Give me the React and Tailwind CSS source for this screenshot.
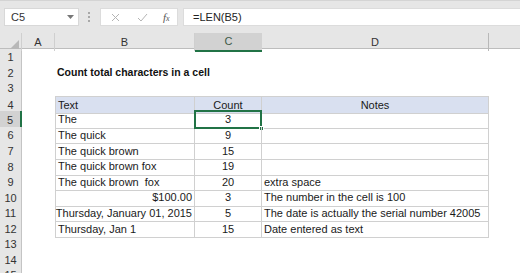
import React from 'react';

const font = { fontFamily: '"Liberation Sans", Arial, sans-serif' };

const rows = [
  { n: 1 },
  { n: 2, title: 'Count total characters in a cell' },
  { n: 3 },
  { n: 4, head: true, b: 'Text', c: 'Count', d: 'Notes' },
  { n: 5, b: 'The', c: '3', d: '', selected: true },
  { n: 6, b: 'The quick', c: '9', d: '' },
  { n: 7, b: 'The quick brown', c: '15', d: '' },
  { n: 8, b: 'The quick brown fox', c: '19', d: '' },
  { n: 9, b: 'The quick brown  fox', c: '20', d: 'extra space' },
  { n: 10, b: '$100.00', right: true, c: '3', d: 'The number in the cell is 100' },
  { n: 11, b: 'Thursday, January 01, 2015', right: true, c: '5', d: 'The date is actually the serial number 42005' },
  { n: 12, b: 'Thursday, Jan 1', c: '15', d: 'Date entered as text' },
  { n: 13 },
  { n: 14 },
  { n: 15 },
];

const FormulaBar = () => (
  <div className="h-[33px] bg-[#e6e6e6] border-t border-[#d4d4d4] flex items-center">
    <div className="ml-[4px] w-[75px] h-[18px] bg-white border border-[#d8d8d8] flex items-center justify-between pl-[6px] pr-[4px]">
      <span className="text-[11px] text-[#333]">C5</span>
      <svg width="7" height="4" viewBox="0 0 7 4"><path d="M0 0h7L3.5 4z" fill="#777" /></svg>
    </div>
    <div className="ml-[9px] flex flex-col gap-[2px]">
      <span className="w-[2px] h-[2px] bg-[#a8a8a8]" />
      <span className="w-[2px] h-[2px] bg-[#a8a8a8]" />
      <span className="w-[2px] h-[2px] bg-[#a8a8a8]" />
    </div>
    <div className="ml-[10px] w-[78px] h-[18px] bg-white border border-[#dcdcdc] flex items-center">
      <svg className="ml-[10px]" width="9" height="9" viewBox="0 0 9 9">
        <path d="M1 1l7 7M8 1L1 8" stroke="#b4b4b4" strokeWidth="1" />
      </svg>
      <svg className="ml-[17px]" width="11" height="9" viewBox="0 0 11 9">
        <path d="M1 5l3 3 6-7" stroke="#b4b4b4" strokeWidth="1" fill="none" />
      </svg>
      <span className="ml-[15px] text-[11px] italic text-[#555]" style={{ fontFamily: '"Liberation Serif", serif' }}>
        f<span className="text-[8px]">x</span>
      </span>
    </div>
    <div className="ml-[5px] flex-1 h-[18px] bg-white border-y border-l border-[#dcdcdc] flex items-center pl-[9px]">
      <span className="text-[11px] text-[#222]">=LEN(B5)</span>
    </div>
  </div>
);

const ColHeaders = () => (
  <div className="grid grid-cols-[22px_33px_140px_67px_227px_1fr] h-[16px] bg-[#e6e6e6] border-b border-[#bdbdbd] text-[11px] text-[#333]">
    <div className="relative border-r border-[#cfcfcf]">
      <svg className="absolute right-[2px] bottom-[2px]" width="9" height="9" viewBox="0 0 9 9">
        <path d="M9 0v9H0z" fill="#b8b8b8" />
      </svg>
    </div>
    <div className="flex items-center justify-center border-r border-[#cfcfcf]">A</div>
    <div className="flex items-center justify-center border-r border-[#cfcfcf]">B</div>
    <div className="flex items-center justify-center bg-[#d2d2d2] border-b-2 border-[#217346] text-[#3d5a48] -mb-px">C</div>
    <div className="flex items-center justify-center border-r border-[#b8b8b8]">D</div>
    <div />
  </div>
);

const Row = ({ r }) => {
  const inTable = r.b !== undefined;
  const line = 'border-[#d0d0d0]';
  return (
    <div className="grid grid-cols-[22px_33px_140px_67px_227px_1fr] h-[15.6px] text-[11px] text-[#1a1a1a]">
      <div
        className={
          r.selected
            ? 'flex items-center justify-center bg-[#d2d2d2] border-r-2 border-[#217346] text-[#333]'
            : 'flex items-center justify-center bg-[#e6e6e6] border-r border-[#c4c4c4] text-[#333]'
        }
      >
        {r.n}
      </div>
      <div />
      <div
        className={
          inTable
            ? `flex items-center px-[2px] whitespace-pre border-l border-r border-b ${line} ${r.head ? 'bg-[#d9e0f0] border-t' : ''} ${r.right ? 'justify-end' : ''}`
            : 'flex items-center px-[2px] whitespace-nowrap overflow-visible'
        }
      >
        {r.title ? <span className="font-bold text-[10.5px] text-[#111]">{r.title}</span> : r.b}
      </div>
      <div
        className={
          inTable
            ? `relative flex items-center justify-center border-r border-b ${line} ${r.head ? 'bg-[#d9e0f0] border-t' : ''}`
            : ''
        }
      >
        {r.c}
        {r.selected && (
          <>
            <div className="absolute -left-px -top-px -right-px -bottom-px border-2 border-[#217346]" />
            <div className="absolute -right-[3px] -bottom-[3px] w-[5px] h-[5px] bg-[#217346] border border-white" />
          </>
        )}
      </div>
      <div
        className={
          inTable
            ? `flex items-center px-[2px] whitespace-nowrap border-r border-b ${line} ${r.head ? 'bg-[#d9e0f0] border-t justify-center' : ''}`
            : ''
        }
      >
        {r.d}
      </div>
      <div />
    </div>
  );
};

export default function App() {
  return (
    <div className="w-[520px] h-[273px] overflow-hidden bg-white" style={font}>
      <FormulaBar />
      <ColHeaders />
      {rows.map((r) => (
        <Row key={r.n} r={r} />
      ))}
    </div>
  );
}
